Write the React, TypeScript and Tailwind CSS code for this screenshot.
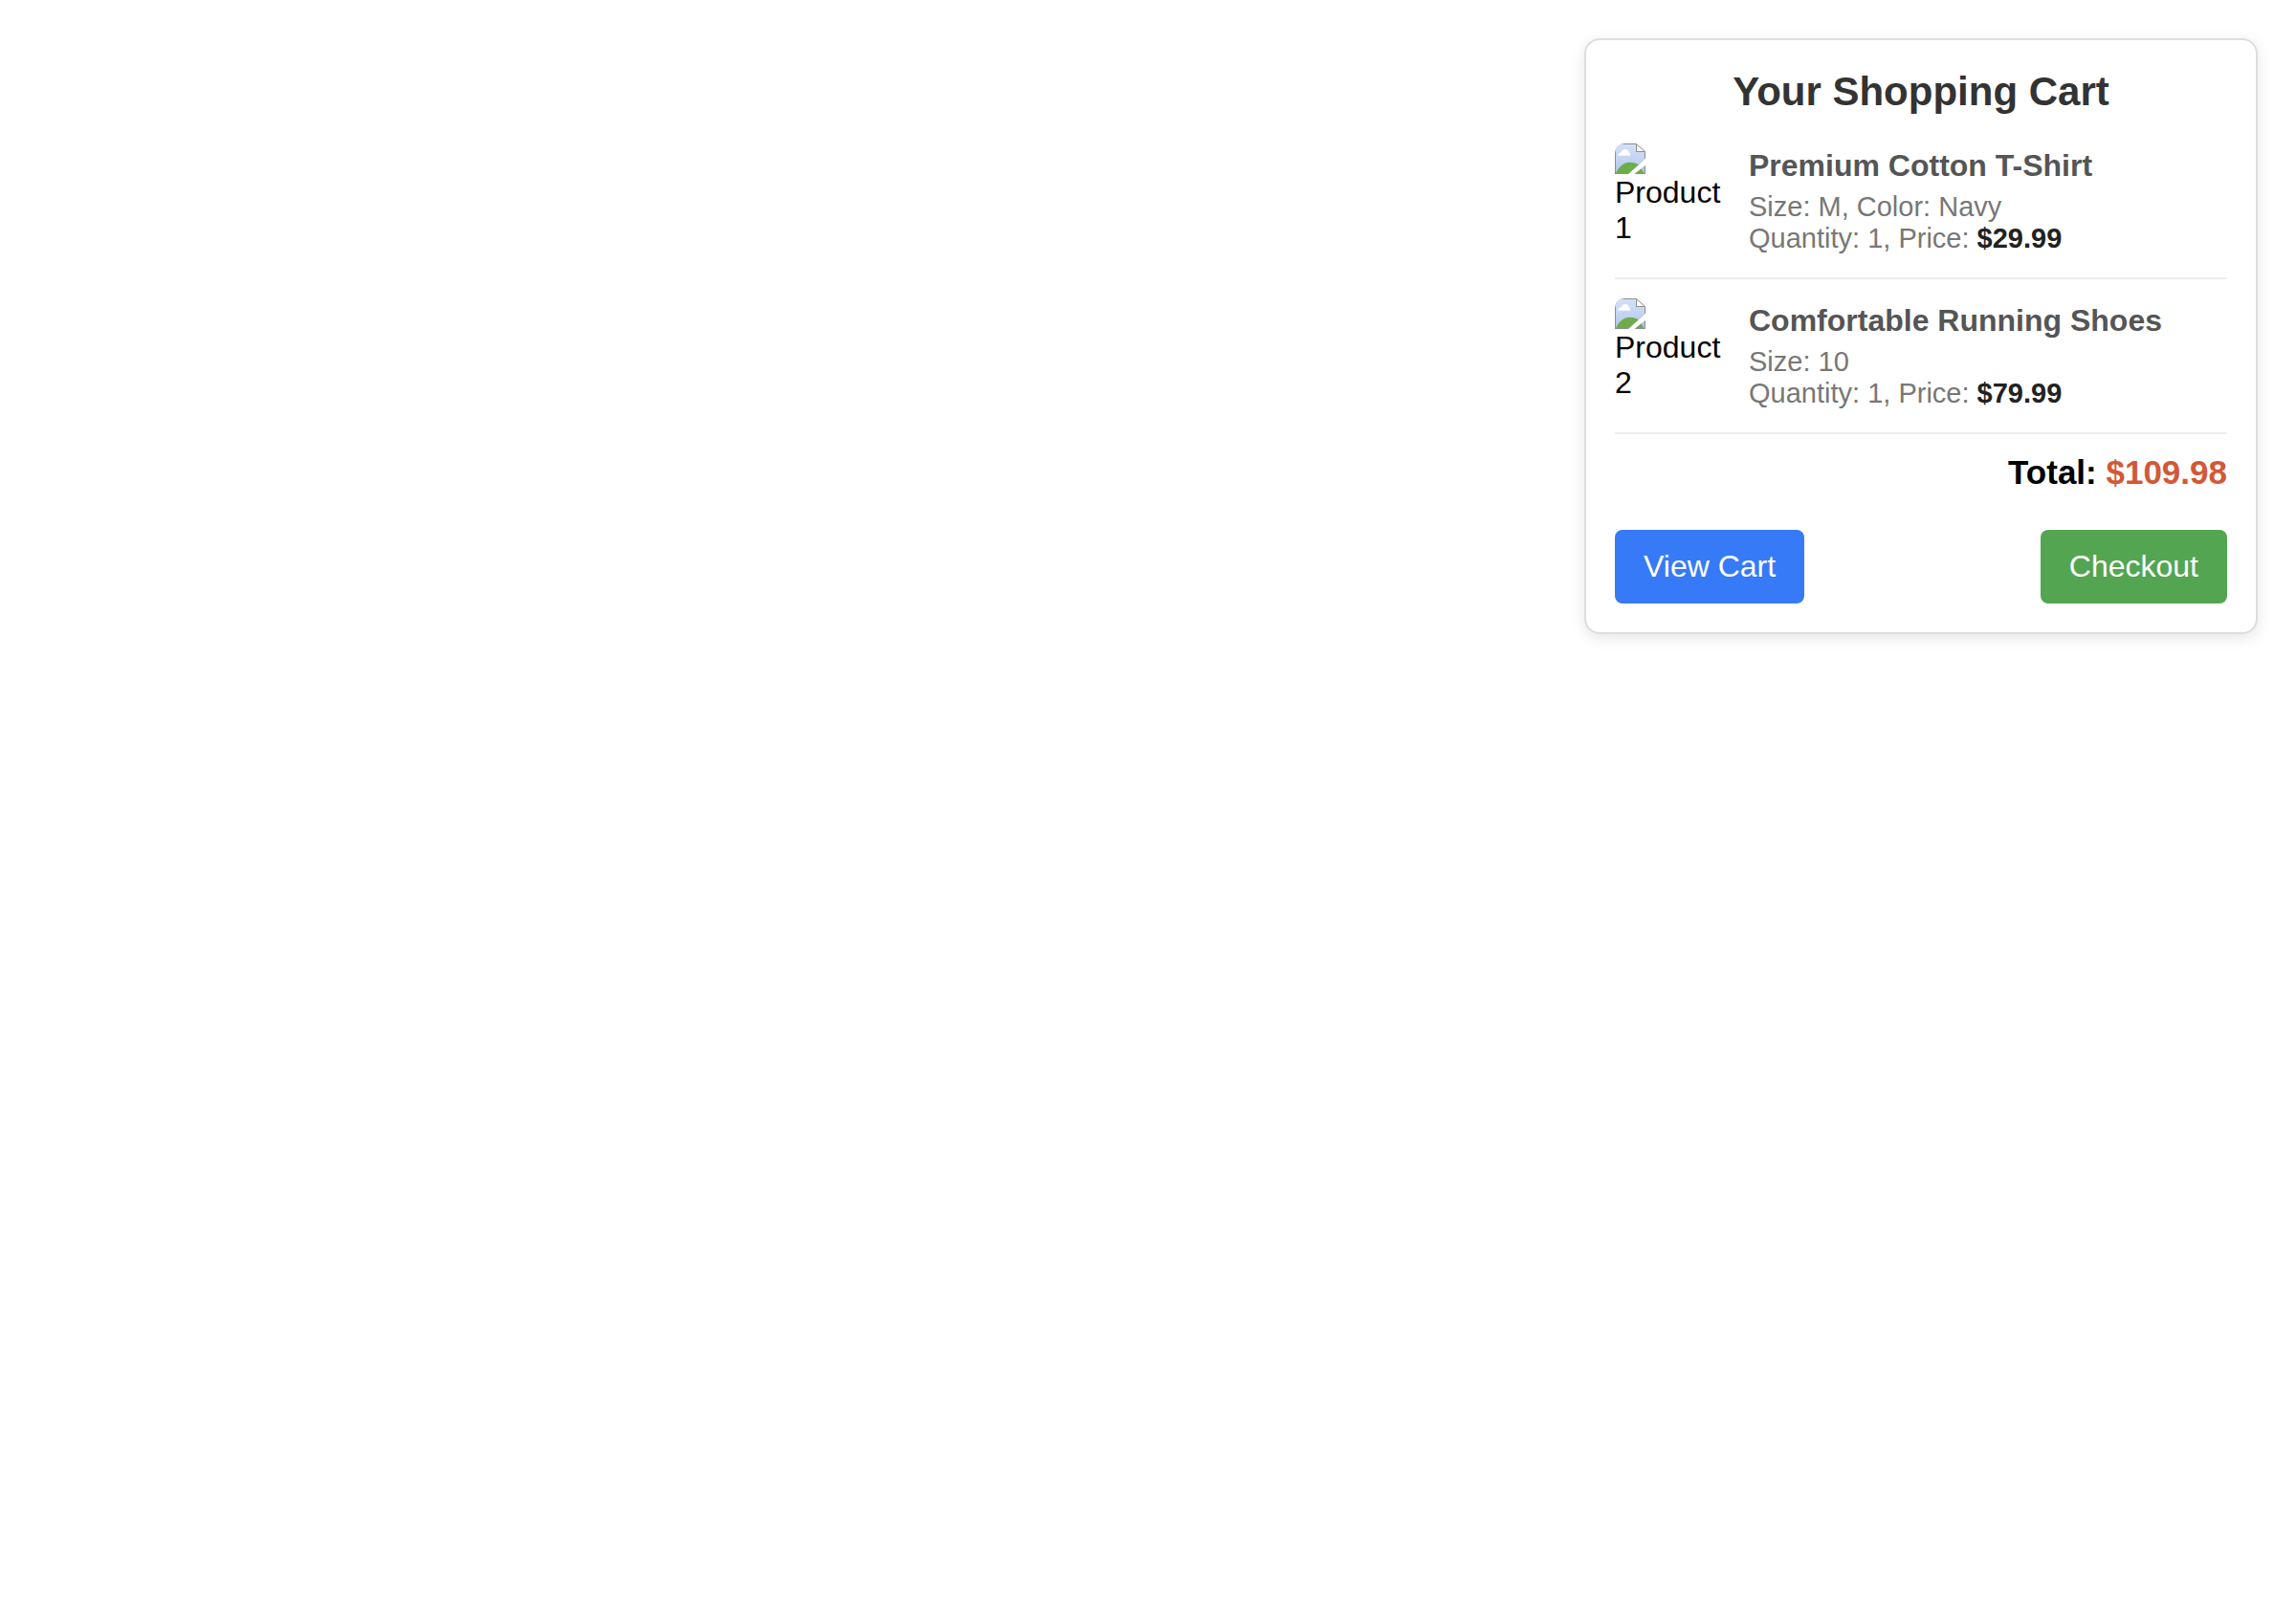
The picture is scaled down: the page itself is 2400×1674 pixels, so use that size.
type Product = {
  alt: string;
  name: string;
  options: string;
  quantity: number;
  price: string;
};

const products: Product[] = [
  { alt: "Product 1", name: "Premium Cotton T-Shirt", options: "Size: M, Color: Navy", quantity: 1, price: "$29.99" },
  { alt: "Product 2", name: "Comfortable Running Shoes", options: "Size: 10", quantity: 1, price: "$79.99" },
];

function MissingImageIcon({ id }: { id: string }) {
  return (
    <svg className="block h-8 w-8" viewBox="0 0 32 32" aria-hidden="true">
      <defs>
        <linearGradient id={id} x1="0" y1="0" x2="0" y2="1">
          <stop offset="0" stopColor="#d3e1fa" />
          <stop offset="1" stopColor="#b4c6e8" />
        </linearGradient>
      </defs>
      <path d="M0 0H22L32 9V15.5L14 32H0Z" fill="#8f8f8f" />
      <path d="M32 23V32H20.5Z" fill="#8f8f8f" />
      <path d="M1 1H22V9H31V16.4L14.8 31H1Z" fill={`url(#${id})`} />
      <path d="M31 23.8V31H22Z" fill="#b4c6e8" />
      <path d="M1 31C4.5 24 9.5 19.8 15.5 19.8C19.5 19.8 22.5 21 24.8 22.2L14.8 31Z" fill="#6eac4a" />
      <path d="M22 31L27.4 26.6C28.8 28 29.8 29.4 30.4 31Z" fill="#6eac4a" />
      <path d="M3.5 12.8C3 10.8 4.5 9.4 6.5 9.4C7.2 7 9 6 11 6C13.2 6 14.4 7.4 14.7 9.3C16 9.8 16.5 11.3 16 12.8Z" fill="#fff" />
      <path d="M22.5 0.5V8.5H31.5Z" fill="#fff" stroke="#8f8f8f" strokeWidth="1" />
    </svg>
  );
}

function CartItem({ product, index }: { product: Product; index: number }) {
  return (
    <li className="flex items-center gap-5 border-b-2 border-[#eeeeee] pb-5">
      <figure className="flex h-[120px] w-[120px] shrink-0 flex-col gap-px overflow-hidden rounded-[10px]">
        <MissingImageIcon id={`sky-${index}`} />
        <figcaption className="text-[32px] leading-[37px] text-black">{product.alt}</figcaption>
      </figure>
      <div className="min-w-0 flex-1">
        <h3 className="mb-2 text-[32px] leading-[37px] font-bold text-[#555555]">{product.name}</h3>
        <p className="text-[29px] leading-[33px] text-[#777777]">{product.options}</p>
        <p className="text-[29px] leading-[33px] text-[#777777]">
          Quantity: {product.quantity}, Price: <strong className="font-bold text-[#222222]">{product.price}</strong>
        </p>
      </div>
    </li>
  );
}

export default function App() {
  return (
    <main className="flex min-h-screen items-start justify-end bg-white p-10 font-['Liberation_Sans',Arial,sans-serif]">
      <section
        aria-labelledby="cart-title"
        className="w-full max-w-[704px] rounded-2xl border-2 border-[#dddddd] bg-white p-[30px] shadow-[0_4px_16px_rgba(0,0,0,0.1)]"
      >
        <h2 id="cart-title" className="mb-[30px] text-center text-[42px] leading-[48px] font-bold text-[#333333]">
          Your Shopping Cart
        </h2>
        <ul className="flex flex-col gap-5">
          {products.map((product, index) => (
            <CartItem key={product.alt} product={product} index={index} />
          ))}
        </ul>
        <p className="mt-5 mb-10 text-right text-[35px] leading-[40px] font-bold text-black">
          Total: <span className="text-[#d35836]">$109.98</span>
        </p>
        <div className="flex items-center justify-between">
          <button type="button" className="rounded-lg bg-[#377af7] px-[30px] py-5 text-[32px] leading-[37px] text-white">
            View Cart
          </button>
          <button type="button" className="rounded-lg bg-[#54a552] px-[30px] py-5 text-[32px] leading-[37px] text-white">
            Checkout
          </button>
        </div>
      </section>
    </main>
  );
}
